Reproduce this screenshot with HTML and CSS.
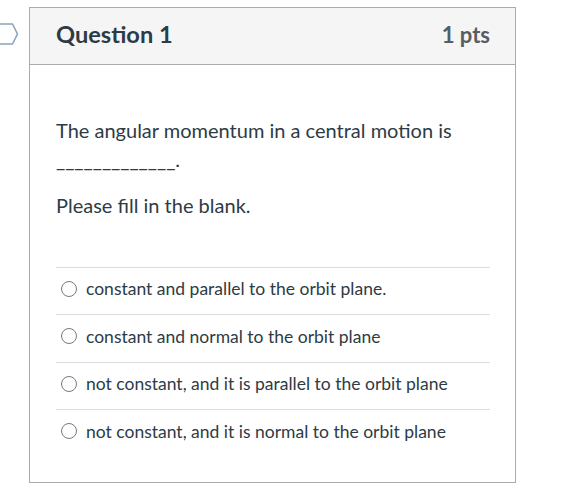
FILE: index.html
```html
<!DOCTYPE html>
<html>
<head>
<meta charset="utf-8">
<link rel="stylesheet" href="styles.css">
</head>
<body>
<div class="question">
  <svg class="marker" width="20" height="22" viewBox="0 0 20 22">
    <path d="M-4 1 H12.5 L17.5 11 L12.5 21 H-4" fill="#fff" stroke="#8aa3bb" stroke-width="1.6" stroke-linejoin="round"/>
  </svg>
  <div class="q-header">
    <span class="q-title">Question 1</span>
    <span class="q-pts">1 pts</span>
  </div>
  <div class="q-body">
    <p class="q-text">The angular momentum in a central motion is _____________.</p>
    <p class="q-text">Please fill in the blank.</p>
    <div class="answers">
      <label class="answer"><span class="radio"></span><span>constant and parallel to the orbit plane.</span></label>
      <label class="answer"><span class="radio"></span><span>constant and normal to the orbit plane</span></label>
      <label class="answer"><span class="radio"></span><span>not constant, and it is parallel to the orbit plane</span></label>
      <label class="answer"><span class="radio"></span><span>not constant, and it is normal to the orbit plane</span></label>
    </div>
  </div>
</div>
</body>
</html>
```

FILE: styles.css
```css
html, body {
  margin: 0;
  padding: 0;
  background: #fff;
}
body {
  font-family: Lato, "Liberation Sans", sans-serif;
  color: #2d3b45;
  padding: 7px 0 0 29px;
}
.question {
  position: relative;
  width: 485px;
  height: 474px;
  border: 1px solid #ababab;
}
.marker {
  position: absolute;
  left: -30px;
  top: 15px;
}
.q-header {
  height: 52px;
  background: #f5f5f5;
  border-bottom: 1px solid #ababab;
  display: flex;
  align-items: center;
  justify-content: space-between;
  padding: 0 25px 4px 26px;
}
.q-title {
  font-size: 23.6px;
  font-weight: 700;
  color: #2d3b45;
}
.q-pts {
  font-size: 22px;
  font-weight: 700;
  color: #575d62;
}
.q-body {
  padding: 50.5px 25px 0 26px;
}
.q-text {
  margin: 0 0 17px;
  font-size: 20px;
  line-height: 29px;
}
.answers {
  margin-top: 47.5px;
}
.answer {
  display: flex;
  align-items: center;
  gap: 9px;
  height: 42px;
  padding: 0 0 5px 5px;
  border-top: 1px solid #dcdcdc;
  font-size: 17.5px;
}
.answer:nth-child(odd) {
  height: 41px;
}
.radio {
  width: 16px;
  height: 16px;
  border: 1px solid #7a7a7a;
  border-radius: 50%;
  box-sizing: border-box;
  flex: none;
}
```
